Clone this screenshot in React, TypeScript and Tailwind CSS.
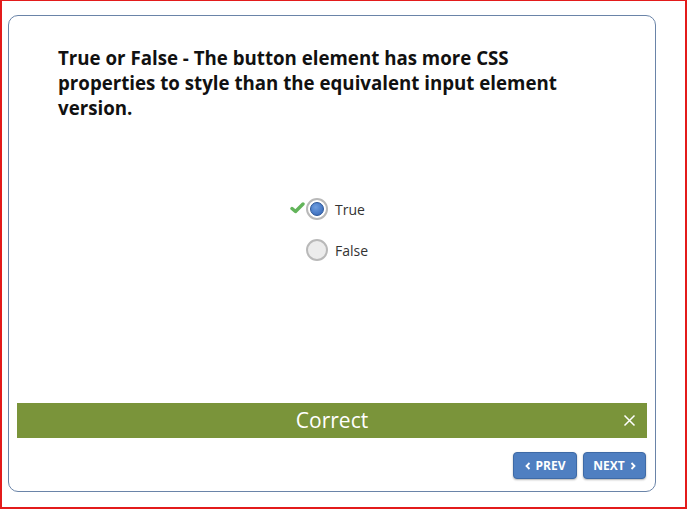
import React from "react";

export default function App() {
  return (
    <div
      className="w-[687px] h-[509px] bg-white border-l-2 border-r-2 border-b-2 border-t border-[#e31b1b] pl-[6px] pt-[14px]"
      style={{ fontFamily: '"Open Sans", sans-serif' }}
    >
      <div className="w-[648px] h-[477px] border border-[#6a84a8] rounded-[10px] flex flex-col">
        <div className="pl-[49px] pt-[29px] w-[560px] text-[18.7px] leading-[25px] font-bold text-[#111]">
          True or False - The button element has more CSS properties to style than the equivalent input element version.
        </div>
        <div className="flex flex-col items-start pl-[297px] pt-[78px] gap-[19px]">
          <div className="flex items-center h-[22px] relative">
            <svg className="absolute left-[-16px] top-[4px]" width="15" height="12" viewBox="0 0 15 12">
              <path d="M2 6.5 L5.5 9.5 L13 2" fill="none" stroke="#62b45a" strokeWidth="3.4" strokeLinecap="round" strokeLinejoin="round" />
            </svg>
            <div className="w-[22px] h-[22px] rounded-full border-2 border-[#b9b9b9] bg-white flex items-center justify-center">
              <div className="w-[14px] h-[14px] rounded-full bg-[radial-gradient(circle_at_40%_35%,#6f9ee0,#2f62b4)] border border-[#2a5598]" />
            </div>
            <span className="ml-[7px] text-[14px] text-[#333]">True</span>
          </div>
          <div className="flex items-center h-[22px]">
            <div className="w-[22px] h-[22px] rounded-full border-2 border-[#b9b9b9] bg-[#ececec]" />
            <span className="ml-[7px] text-[14px] text-[#333]">False</span>
          </div>
        </div>
        <div className="flex-1" />
        <div className="mx-[8px] h-[35px] bg-[#7a943a] relative flex items-center justify-center">
          <span className="text-white text-[21px] font-normal">Correct</span>
          <svg className="absolute right-[11px] top-[11px]" width="13" height="13" viewBox="0 0 13 13">
            <path d="M1.5 1.5 L11.5 11.5 M11.5 1.5 L1.5 11.5" stroke="#ffffff" strokeWidth="1.5" />
          </svg>
        </div>
        <div className="flex justify-end gap-[6px] pr-[9px] pt-[14px] pb-[12px]">
          <button className="w-[64px] h-[27px] rounded-[4px] bg-[#4f7fc1] border border-[#3e6aa6] shadow-[0_1px_2px_rgba(0,0,0,0.3)] text-white text-[12px] font-bold flex items-center justify-center gap-[5px]">
            <svg width="6" height="8" viewBox="0 0 6 8"><path d="M4.5 1 L1.5 4 L4.5 7" fill="none" stroke="#fff" strokeWidth="1.8" /></svg>
            PREV
          </button>
          <button className="w-[63px] h-[27px] rounded-[4px] bg-[#4f7fc1] border border-[#3e6aa6] shadow-[0_1px_2px_rgba(0,0,0,0.3)] text-white text-[12px] font-bold flex items-center justify-center gap-[5px]">
            NEXT
            <svg width="6" height="8" viewBox="0 0 6 8"><path d="M1.5 1 L4.5 4 L1.5 7" fill="none" stroke="#fff" strokeWidth="1.8" /></svg>
          </button>
        </div>
      </div>
    </div>
  );
}
